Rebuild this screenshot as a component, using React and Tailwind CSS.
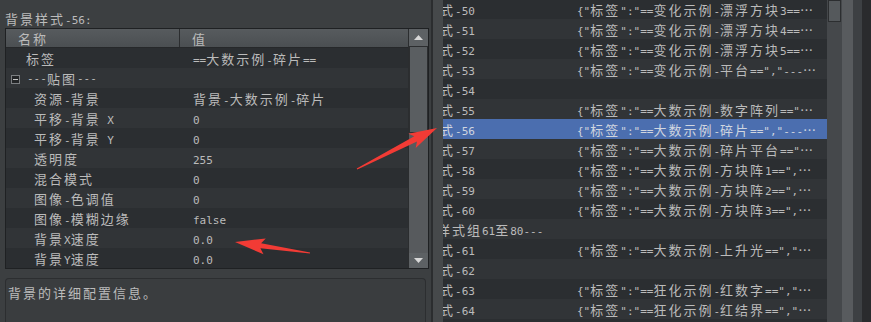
import React from "react";

const CJK = /([\u2026\u3000-\u303f\u4e00-\u9fff\uff00-\uffef]+)/;

// split text into CJK runs and latin runs, they use different fonts/sizes
const Txt = ({ s }) =>
  s
    .split(CJK)
    .filter(Boolean)
    .map((p, i) =>
      CJK.test(p) ? (
        <span key={i} className="font-['Noto_Sans_CJK_SC',sans-serif] text-[13px] tracking-[2px]">
          {p}
        </span>
      ) : (
        <span key={i} className="font-['DejaVu_Sans_Mono',monospace] text-[11px]">
          {p}
        </span>
      ),
    );

const row = "h-5 leading-[22px] whitespace-nowrap overflow-hidden font-['Noto_Sans_CJK_SC',sans-serif] text-[13px]";

const props = [
  { name: "标签", value: "==大数示例-碎片==", top: true },
  { group: "---贴图---" },
  { name: "资源-背景", value: "背景-大数示例-碎片" },
  { name: "平移-背景 X", value: "0" },
  { name: "平移-背景 Y", value: "0" },
  { name: "透明度", value: "255" },
  { name: "混合模式", value: "0" },
  { name: "图像-色调值", value: "0" },
  { name: "图像-模糊边缘", value: "false" },
  { name: "背景X速度", value: "0.0" },
  { name: "背景Y速度", value: "0.0" },
];

const styles = [
  { id: "背景样式-50", data: '==变化示例-漂浮方块3==…' },
  { id: "背景样式-51", data: '==变化示例-漂浮方块4==…' },
  { id: "背景样式-52", data: '==变化示例-漂浮方块5==…' },
  { id: "背景样式-53", data: '==变化示例-平台==","---…' },
  { id: "背景样式-54", data: "" },
  { id: "背景样式-55", data: '==大数示例-数字阵列=="…' },
  { id: "背景样式-56", data: '==大数示例-碎片==","---…', selected: true },
  { id: "背景样式-57", data: '==大数示例-碎片平台=="…' },
  { id: "背景样式-58", data: '==大数示例-方块阵1==",…' },
  { id: "背景样式-59", data: '==大数示例-方块阵2==",…' },
  { id: "背景样式-60", data: '==大数示例-方块阵3==",…' },
  { group: "---背景样式组61至80---" },
  { id: "背景样式-61", data: '==大数示例-上升光==","…' },
  { id: "背景样式-62", data: "" },
  { id: "背景样式-63", data: '==狂化示例-红数字==","…' },
  { id: "背景样式-64", data: '==狂化示例-红结界==","…' },
  { id: "背景样式-65", data: "" },
];

const arrow = (tx, ty, px, py, len, half, shaft) => {
  const d = Math.hypot(px - tx, py - ty);
  const ux = (px - tx) / d;
  const uy = (py - ty) / d;
  const nx = -uy;
  const ny = ux;
  const bx = px - ux * len;
  const by = py - uy * len;
  const pts = [
    [tx + nx * 0.6, ty + ny * 0.6],
    [bx + nx * shaft + ux * 4, by + ny * shaft + uy * 4],
    [bx + nx * half, by + ny * half],
    [px, py],
    [bx - nx * half, by - ny * half],
    [bx - nx * shaft + ux * 4, by - ny * shaft + uy * 4],
    [tx - nx * 0.6, ty - ny * 0.6],
  ];
  return pts.map(p => p.map(v => v.toFixed(1)).join(",")).join(" ");
};

const Tri = ({ down }) => (
  <svg width="9" height="5" viewBox="0 0 9 5">
    <polygon points={down ? "0,0 9,0 4.5,5" : "0,5 9,5 4.5,0"} fill="#d8d8d8" />
  </svg>
);

const App = () => {
  return (
    <div className="relative flex w-[871px] h-[322px] overflow-hidden bg-[#3c3f41] text-[#bbbbbb]">
      {/* left: property sheet */}
      <div className="flex flex-col w-[431px] h-full">
        <div className="h-7 pl-[5px] pt-[8px] leading-[22px] whitespace-nowrap font-['Noto_Sans_CJK_SC',sans-serif] text-[13px]">
          <Txt s="背景样式-56:" />
        </div>
        <div className="ml-[5px] w-[424px] h-[241px] flex border border-[#1f2123]">
          <div className="flex-1 flex flex-col">
            <div className="flex h-[19px] bg-gradient-to-b from-[#575b5e] to-[#4b4f52] border-b border-[#26282a] leading-[19px] font-['Noto_Sans_CJK_SC',sans-serif] text-[13px] whitespace-nowrap">
              <div className="w-[174px] pl-[12px] border-r border-[#2b2d2f]">
                <Txt s="名称" />
              </div>
              <div className="flex-1 pl-[12px]">
                <Txt s="值" />
              </div>
            </div>
            {props.map((p, i) => (
              <div key={i} className={`flex ${row} ${i % 2 ? "bg-[#313437]" : "bg-[#2b2e31]"}`}>
                {p.group ? (
                  <div className="flex items-start pl-[5px]">
                    <div className="mt-[7px] mr-[7px] w-[9px] h-[9px] border border-[#7b7e81] bg-[#232527] flex items-center justify-center">
                      <div className="w-[5px] h-px bg-[#c8c8c8]" />
                    </div>
                    <Txt s={p.group} />
                  </div>
                ) : (
                  <>
                    <div className={`w-[175px] ${p.top ? "pl-[20px]" : "pl-[28px]"}`}>
                      <Txt s={p.name} />
                    </div>
                    <div className="flex-1 pl-[12px]">
                      <Txt s={p.value} />
                    </div>
                  </>
                )}
              </div>
            ))}
          </div>
          <div className="w-5 flex flex-col border-l border-[#2b2d2f] bg-[#575a5d]">
            <div className="h-[17px] flex items-center justify-center bg-[#5d6164]">
              <Tri />
            </div>
            <div className="flex-1">
              <div className="h-[87px] border border-[#2c2e30] bg-[#5a5e61]" />
            </div>
            <div className="h-[15px] flex items-center justify-center bg-[#5d6164]">
              <Tri down />
            </div>
          </div>
        </div>
        <div className="ml-[5px] mt-[9px] w-[421px] flex-1 rounded-t-[4px] border border-b-0 border-[#2c2e30] bg-[#3a3d3f] pl-[2px] pt-[3px]">
          <div className={row}>
            <Txt s="背景的详细配置信息。" />
          </div>
        </div>
      </div>

      {/* right: style list */}
      <div className="w-[12px] h-full border-l-2 border-[#2b2d2f] bg-[#46494b]" />
      <div className="w-[384px] h-full overflow-hidden">
        <div className="-mt-px">
          {styles.map((s, i) => (
            <div
              key={i}
              className={`flex ${row} ${
                s.selected ? "bg-[#4b6eaf] text-[#d0d6e0]" : i % 2 ? "bg-[#313437]" : "bg-[#2b2e31]"
              }`}
            >
              {s.group ? (
                <div className="ml-[-56px]">
                  <Txt s={s.group} />
                </div>
              ) : (
                <>
                  <div className="w-[134px] shrink-0 overflow-hidden">
                    <div className="ml-[-48px]">
                      <Txt s={s.id} />
                    </div>
                  </div>
                  <div className="flex-1">{s.data && <Txt s={'{"标签":"' + s.data} />}</div>
                </>
              )}
            </div>
          ))}
        </div>
      </div>
      <div className="w-[15px] h-full bg-[#45484b] px-px">
        <div className="h-[22px] border border-[#2c2e30] bg-[#55595c]" />
      </div>
      <div className="w-[11px] h-full bg-[#585b5e]" />
      <div className="w-[9px] h-full bg-[#3d4043]" />
      <div className="flex-1 h-full bg-[#2a2b2d]" />

      {/* red annotation arrows */}
      <svg className="absolute inset-0 pointer-events-none" width="871" height="322">
        <polygon points={arrow(357, 169, 437, 128, 28, 8, 3)} fill="#f23b35" />
        <polygon points={arrow(310, 253, 235, 242, 30, 8, 2.5)} fill="#f23b35" />
      </svg>
    </div>
  );
};

export default App;
